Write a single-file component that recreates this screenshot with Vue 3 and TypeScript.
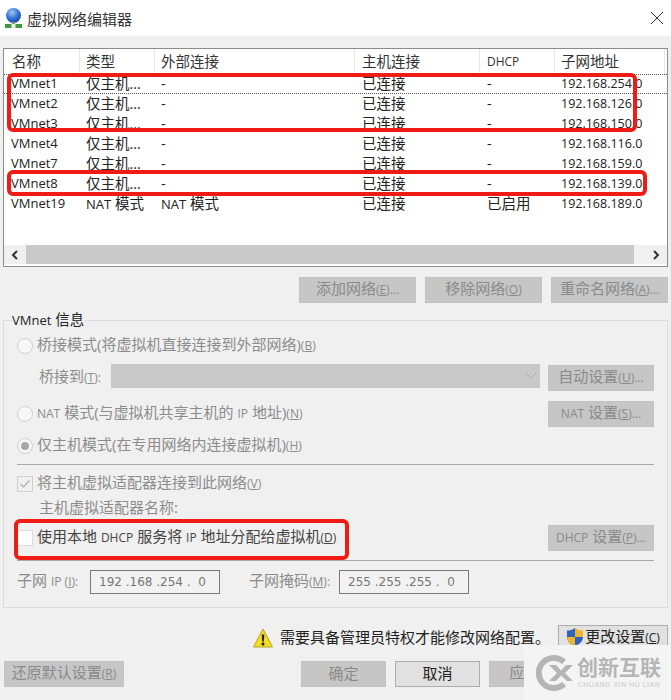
<script setup lang="ts">
const columns = [
  { label: '名称', w: 76 },
  { label: '类型', w: 75 },
  { label: '外部连接', w: 200 },
  { label: '主机连接', w: 125 },
  { label: 'DHCP', w: 75, small: true },
  { label: '子网地址', w: 110 },
]

const rows = [
  ['VMnet1', '仅主机...', '-', '已连接', '-', '192.168.254.0'],
  ['VMnet2', '仅主机...', '-', '已连接', '-', '192.168.126.0'],
  ['VMnet3', '仅主机...', '-', '已连接', '-', '192.168.150.0'],
  ['VMnet4', '仅主机...', '-', '已连接', '-', '192.168.116.0'],
  ['VMnet7', '仅主机...', '-', '已连接', '-', '192.168.159.0'],
  ['VMnet8', '仅主机...', '-', '已连接', '-', '192.168.139.0'],
  ['VMnet19', 'NAT 模式', 'NAT 模式', '已连接', '已启用', '192.168.189.0'],
]
</script>

<template>
  <div class="dialog">
    <div class="titlebar">
      <svg class="app-icon" width="20" height="20" viewBox="0 0 20 20">
        <defs>
          <radialGradient id="globe" cx="0.4" cy="0.3" r="0.8">
            <stop offset="0" stop-color="#9cc8f5" />
            <stop offset="0.55" stop-color="#2f6fd0" />
            <stop offset="1" stop-color="#123f94" />
          </radialGradient>
        </defs>
        <circle cx="10.5" cy="7.5" r="7.5" fill="url(#globe)" />
        <rect x="9" y="14" width="3" height="3" fill="#7d9a72" />
        <rect x="2" y="16" width="17" height="4" fill="#3f9a3c" />
        <rect x="8.5" y="16" width="4" height="4" fill="#e8efe6" />
      </svg>
      <span class="title">虚拟网络编辑器</span>
      <svg class="close" width="14" height="14" viewBox="0 0 14 14">
        <path d="M1 1 L13 13 M13 1 L1 13" stroke="#333" stroke-width="1" fill="none" />
      </svg>
    </div>

    <div class="main">
      <div class="list">
        <div class="list-head">
          <div
            v-for="c in columns"
            :key="c.label"
            class="head-cell"
            :class="{ small: c.small }"
            :style="{ width: c.w + 'px' }"
          >{{ c.label }}</div>
        </div>
        <div class="list-rows">
          <div v-for="(r, i) in rows" :key="r[0]" class="row" :class="{ focused: i === 0 }">
            <div
              v-for="(cell, j) in r"
              :key="j"
              class="cell"
              :style="{ width: columns[j].w + 'px' }"
            >
              <template v-if="cell.startsWith('NAT')"><small>NAT</small> 模式</template>
              <template v-else>{{ cell }}</template>
            </div>
          </div>
        </div>
        <div class="hscroll">
          <span class="arrow">
            <svg width="10" height="12" viewBox="0 0 10 12"><path d="M7 2 L3 6 L7 10" fill="none" stroke="#333" stroke-width="2" /></svg>
          </span>
          <span class="thumb"></span>
          <span class="arrow">
            <svg width="10" height="12" viewBox="0 0 10 12"><path d="M3 2 L7 6 L3 10" fill="none" stroke="#333" stroke-width="2" /></svg>
          </span>
        </div>
      </div>

      <div class="list-actions">
        <button class="btn wide">添加网络<small>(<u>E</u>)...</small></button>
        <button class="btn wide">移除网络<small>(<u>O</u>)</small></button>
        <button class="btn wide">重命名网络<small>(<u>A</u>)...</small></button>
      </div>

      <div class="group">
        <span class="legend"><small class="legend-latin">VMnet</small> 信息</span>

        <div class="line first">
          <span class="radio"></span>
          <span class="dim">桥接模式(将虚拟机直接连接到外部网络)<small>(<u>B</u>)</small></span>
        </div>
        <div class="line bridge">
          <span class="dim indent-label">桥接到<small>(<u>T</u>):</small></span>
          <div class="select">
            <svg width="12" height="8" viewBox="0 0 12 8"><path d="M1 1 L6 6 L11 1" fill="none" stroke="#aeaeae" stroke-width="1" /></svg>
          </div>
          <button class="btn side">自动设置<small>(<u>U</u>)...</small></button>
        </div>
        <div class="line nat">
          <span class="radio"></span>
          <span class="dim"><small>NAT</small> 模式(与虚拟机共享主机的 <small>IP</small> 地址)<small>(<u>N</u>)</small></span>
          <button class="btn side push"><small>NAT</small> 设置<small>(<u>S</u>)...</small></button>
        </div>
        <div class="line host">
          <span class="radio checked"></span>
          <span class="dim">仅主机模式(在专用网络内连接虚拟机)<small>(<u>H</u>)</small></span>
        </div>

        <div class="sep first-sep"></div>

        <div class="line connect">
          <span class="check">
            <svg width="12" height="10" viewBox="0 0 12 10"><path d="M1.5 5 L4.5 8 L10.5 1.5" fill="none" stroke="#b4b4b4" stroke-width="1.4" /></svg>
          </span>
          <span class="dim">将主机虚拟适配器连接到此网络<small>(<u>V</u>)</small></span>
        </div>
        <div class="line name">
          <span class="dim name-label">主机虚拟适配器名称:</span>
        </div>
        <div class="line dhcp">
          <span class="check blank"></span>
          <span class="dark">使用本地 <small>DHCP</small> 服务将 <small>IP</small> 地址分配给虚拟机<small>(<u>D</u>)</small></span>
          <button class="btn side push"><small>DHCP</small> 设置<small>(<u>P</u>)...</small></button>
        </div>

        <div class="sep second-sep"></div>

        <div class="line subnet">
          <span class="dim subnet-label">子网 <small>IP (<u>I</u>):</small></span>
          <span class="ip">192 .168 .254 .&nbsp; 0</span>
          <span class="dim mask-label">子网掩码<small>(<u>M</u>):</small></span>
          <span class="ip">255 .255 .255 .&nbsp; 0</span>
        </div>
      </div>

      <div class="notice">
        <svg width="20" height="20" viewBox="0 0 20 20">
          <path d="M10 1 L19.5 19 L0.5 19 Z" fill="#f5dc1e" stroke="#b9a520" stroke-width="1" stroke-linejoin="round" />
          <path d="M8.7 6.5 H11.3 L10.8 13.5 H9.2 Z" fill="#222" />
          <circle cx="10" cy="16" r="1.5" fill="#222" />
        </svg>
        <span class="notice-text">需要具备管理员特权才能修改网络配置。</span>
        <button class="btn change">
          <svg width="18" height="20" viewBox="0 0 18 20">
            <path d="M9 1 C6 3 4 3.5 1 3.5 V10 C1 14.5 5 17.5 9 19 Z" fill="#2a63c4" />
            <path d="M9 1 C12 3 14 3.5 17 3.5 V10 H9 Z" fill="#f0b429" />
            <path d="M1 10 H9 V19 C5 17.5 1 14.5 1 10 Z" fill="#f0b429" />
            <path d="M9 10 H17 C17 14.5 13 17.5 9 19 Z" fill="#2a63c4" />
          </svg>
          <span>更改设置<small>(<u>C</u>)</small></span>
        </button>
      </div>

      <div class="footer">
        <button class="btn reset">还原默认设置<small>(<u>R</u>)</small></button>
        <button class="btn foot ok">确定</button>
        <button class="btn foot on">取消</button>
        <button class="btn foot">应用<small>(<u>A</u>)</small></button>
      </div>
    </div>

    <div class="mark box-a"></div>
    <div class="mark box-b"></div>
    <div class="mark box-c"></div>

    <div class="watermark">
      <svg width="38" height="38" viewBox="0 0 38 38">
        <path d="M28 8 A15 15 0 1 0 28 30" fill="none" stroke="#b5b5b5" stroke-width="6" />
        <path d="M13 11 L21 19 L13 27 H20 L25 21.5 L31 27 H37 L29 19 L37 11 H30 L25 16.5 L20 11 Z" fill="#b5b5b5" />
      </svg>
      <div class="brand">
        <span class="brand-cn">创新互联</span>
        <span class="brand-en">CHUANG XIN HU LIAN</span>
      </div>
    </div>
  </div>
</template>

<style scoped>
.dialog {
  position: relative;
  width: 671px;
  height: 700px;
  overflow: hidden;
  background: #f0f0f0;
  color: #222;
  font-family: "Open Sans", "Noto Sans CJK SC", sans-serif;
  font-size: 15px;
}

.titlebar {
  height: 36px;
  background: #fff;
  display: flex;
  align-items: center;
  padding: 0 7px 0 3px;
}
.title { margin-left: 4px; color: #333; }
.close { margin-left: auto; }

.main { padding: 12px 3px 0; }

.list {
  height: 219px;
  background: #fff;
  border: 1px solid #8c8c8c;
  box-sizing: border-box;
  display: flex;
  flex-direction: column;
}
.list-head { display: flex; height: 25px; flex: none; }
.head-cell {
  box-sizing: border-box;
  padding-left: 6px;
  font-size: 14.5px;
  line-height: 25px;
  border-right: 1px solid #e8e8e8;
  color: #333;
  flex: none;
}
.head-cell:first-child { padding-left: 8px; }
.head-cell:nth-child(4), .head-cell:nth-child(5) { padding-left: 7px; }
.head-cell.small { font-size: 12px; }
.list-rows { flex: 1; }
.row { display: flex; height: 20px; line-height: 19px; }
.row.focused {
  background-image:
    repeating-linear-gradient(90deg, #555 0 1px, transparent 1px 2px),
    repeating-linear-gradient(90deg, #555 0 1px, transparent 1px 2px);
  background-size: 100% 1px;
  background-position: 0 0, 0 100%;
  background-repeat: no-repeat;
}
.cell {
  box-sizing: border-box;
  padding-left: 6px;
  font-size: 14.5px;
  white-space: nowrap;
  flex: none;
}
.cell:first-child { padding-left: 7px; font-size: 13px; }
.cell:nth-child(4), .cell:nth-child(5) { padding-left: 7px; }
.cell:last-child { font-size: 12.5px; }
.cell small { font-size: 13px; }

.hscroll { display: flex; height: 19px; flex: none; background: #f0f0f0; margin-bottom: 2px; }
.arrow { width: 22px; display: flex; align-items: center; justify-content: center; flex: none; }
.thumb { flex: 1; background: #c9c9c9; margin-right: 11px; }

button.btn {
  box-sizing: border-box;
  border: 1px solid #c3c3c3;
  background: #c6c6c6;
  color: #8a8a8a;
  font: inherit;
  font-size: 15px;
  line-height: 20px;
  padding: 0 0 3px;
  height: 26px;
  white-space: nowrap;
}
.btn u { text-underline-offset: 1px; }

.list-actions {
  display: flex;
  justify-content: flex-end;
  gap: 9px;
  margin-top: 10px;
}
.btn.wide { width: 117px; }

.group {
  position: relative;
  margin-top: 17px;
  height: 288px;
  box-sizing: border-box;
  border: 1px solid #dcdcdc;
  padding: 12px 13px 0;
}
.legend {
  position: absolute;
  left: 8px;
  top: -11px;
  background: #f0f0f0;
  color: #222;
  line-height: 20px;
  font-size: 14.5px;
}
small.legend-latin { font-size: 13px; }
.line { display: flex; align-items: center; height: 26px; }
.dim { color: #8c8c8c; white-space: nowrap; line-height: 20px; padding-bottom: 2px; }
.dark { color: #444; white-space: nowrap; line-height: 20px; padding-bottom: 2px; }
small { font-size: 12px; }

.radio {
  width: 14px;
  height: 14px;
  border: 1px solid #cfcfcf;
  border-radius: 50%;
  background: #f7f7f7;
  margin-right: 4px;
  flex: none;
  position: relative;
}
.radio.checked::after {
  content: "";
  position: absolute;
  inset: 3px;
  border-radius: 50%;
  background: #a8a8a8;
}
.check {
  box-sizing: border-box;
  width: 16px;
  height: 16px;
  border: 1px solid #cfcfcf;
  background: #f0f0f0;
  margin-right: 4px;
  display: flex;
  align-items: center;
  justify-content: center;
  flex: none;
}
.check.blank { background: #fff; border-color: #ddd; }

.bridge { margin-top: 5px; height: 27px; }
.indent-label { width: 72px; margin-left: 22px; flex: none; }
.select {
  width: 429px;
  height: 24px;
  background: #c9c9c9;
  display: flex;
  align-items: center;
  justify-content: flex-end;
  padding-right: 3px;
  box-sizing: border-box;
  flex: none;
  align-self: flex-start;
}
.btn.side { width: 106px; flex: none; }
.bridge .btn.side { margin-left: 8px; }
.push { margin-left: auto; }
.nat { margin-top: 10px; }
.host { margin-top: 6px; }
.sep { height: 1px; background: #a8a8a8; width: 637px; }
.first-sep { margin-top: 5px; }
.connect { margin-top: 6px; }
.name { height: 22px; }
.name-label { padding-left: 22px; }
.dhcp { margin-top: 6px; }
.second-sep { margin-top: 9px; }
.subnet { margin-top: 9px; height: 24px; }
.subnet-label { width: 73px; flex: none; }
.mask-label { width: 90px; margin-left: 29px; flex: none; }
.ip {
  box-sizing: border-box;
  width: 130px;
  height: 24px;
  border: 1px solid #7a7a7a;
  background: #f2f2f2;
  color: #777;
  font-family: "DejaVu Sans", sans-serif;
  font-size: 12px;
  line-height: 22px;
  padding-left: 8px;
  white-space: nowrap;
}

.notice {
  display: flex;
  align-items: center;
  height: 26px;
  margin-top: 17px;
  padding-left: 250px;
}
.notice-text { margin-left: 7px; color: #222; white-space: nowrap; line-height: 20px; padding-bottom: 2px; }
button.btn.change {
  margin-left: 8px;
  width: 110px;
  height: 26px;
  background: #e1e1e1;
  border-color: #adadad;
  color: #222;
  display: flex;
  align-items: center;
  justify-content: center;
  gap: 1px;
  flex: none;
}

.footer { display: flex; gap: 9px; margin-top: 10px; padding-left: 1px; }
.btn.reset { width: 120px; }
.btn.foot { width: 85px; }
.btn.ok { margin-left: 168px; }
button.btn.on { background: #e1e1e1; border-color: #adadad; color: #222; }

.mark {
  position: absolute;
  box-sizing: border-box;
  border: 4px solid #ee1c14;
  border-radius: 6px;
  pointer-events: none;
}
.box-a { left: 7px; top: 73px; width: 630px; height: 59px; }
.box-b { left: 7px; top: 170px; width: 640px; height: 26px; }
.box-c { left: 14px; top: 519px; width: 335px; height: 41px; }

.watermark {
  position: absolute;
  left: 524px;
  top: 645px;
  width: 147px;
  height: 55px;
  background: #f4f4f4;
  display: flex;
  align-items: center;
  padding-left: 12px;
  box-sizing: border-box;
  gap: 3px;
}
.brand { display: flex; flex-direction: column; align-items: center; gap: 3px; }
.brand-cn {
  color: #b5b5b5;
  font-size: 21px;
  font-weight: 700;
  line-height: 21px;
  white-space: nowrap;
}
.brand-en {
  color: #c8c8c8;
  font-family: "Liberation Sans", sans-serif;
  font-size: 7px;
  line-height: 8px;
  letter-spacing: 0.5px;
  white-space: nowrap;
}
</style>
